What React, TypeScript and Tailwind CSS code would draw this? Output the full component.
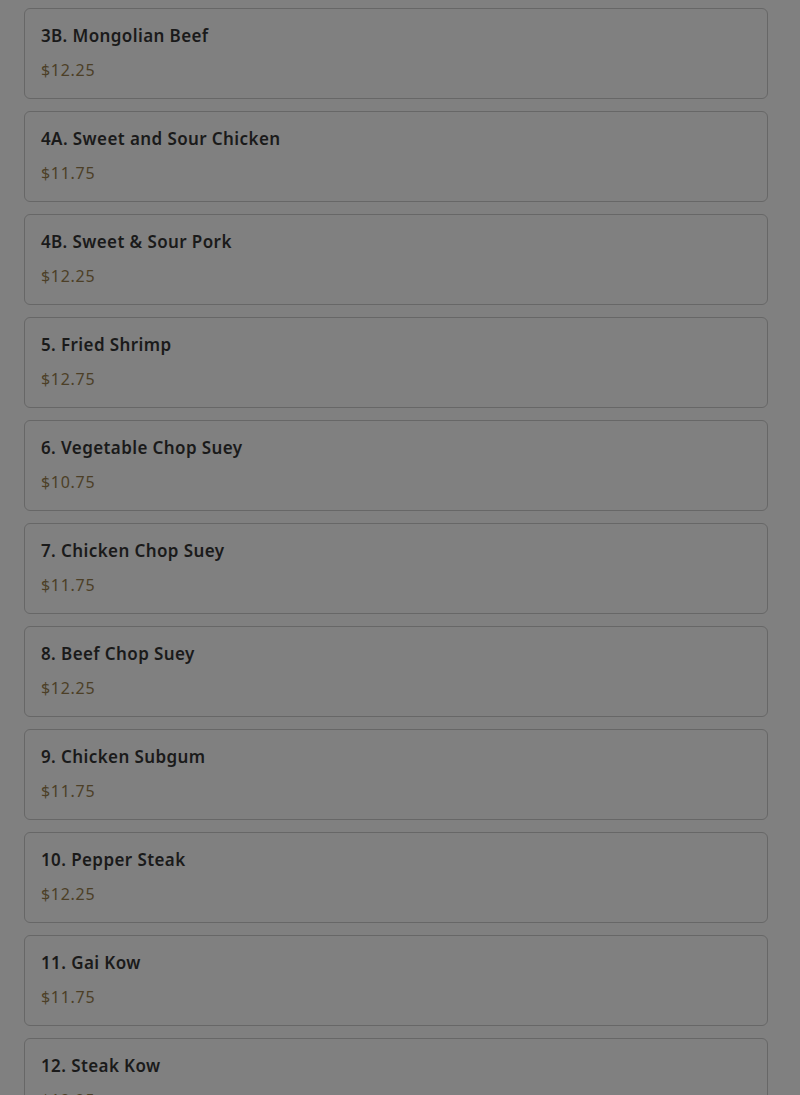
const ITEMS = [
  { name: "3B. Mongolian Beef", price: "$12.25" },
  { name: "4A. Sweet and Sour Chicken", price: "$11.75" },
  { name: "4B. Sweet & Sour Pork", price: "$12.25" },
  { name: "5. Fried Shrimp", price: "$12.75" },
  { name: "6. Vegetable Chop Suey", price: "$10.75" },
  { name: "7. Chicken Chop Suey", price: "$11.75" },
  { name: "8. Beef Chop Suey", price: "$12.25" },
  { name: "9. Chicken Subgum", price: "$11.75" },
  { name: "10. Pepper Steak", price: "$12.25" },
  { name: "11. Gai Kow", price: "$11.75" },
  { name: "12. Steak Kow", price: "$12.25" },
];

export default function App() {
  return (
    <div className="h-screen w-full overflow-hidden bg-[#808080] pl-6 pr-8 pt-2 font-['Noto_Sans',sans-serif]">
      <div className="flex flex-col gap-3">
        {ITEMS.map((item) => (
          <div
            key={item.name}
            className="shrink-0 rounded-md border border-[#676767] px-4 pt-4 pb-4"
          >
            <div className="text-[17px] leading-[22px] font-semibold tracking-[0.4px] text-[#1a1a1a]">
              {item.name}
            </div>
            <div className="mt-[11px] text-base leading-6 tracking-[0.7px] text-[#4c3f27]">
              {item.price}
            </div>
          </div>
        ))}
      </div>
    </div>
  );
}
